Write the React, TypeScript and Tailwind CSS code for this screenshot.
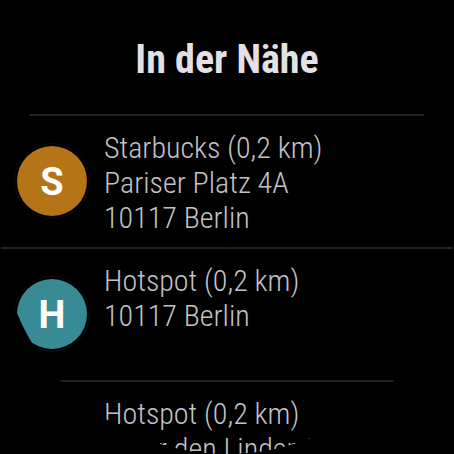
import React from "react";

type Place = {
  id: number;
  letter: string;
  color: string;
  lines: string[];
};

const places: Place[] = [
  {
    id: 1,
    letter: "S",
    color: "bg-[#b47417]",
    lines: ["Starbucks (0,2 km)", "Pariser Platz 4A", "10117 Berlin"],
  },
  {
    id: 2,
    letter: "H",
    color: "bg-[#388b94]",
    lines: ["Hotspot (0,2 km)", "10117 Berlin"],
  },
  {
    id: 3,
    letter: "H",
    color: "bg-[#388b94]",
    lines: ["Hotspot (0,2 km)", "Unter den Linden 77"],
  },
];

const PlaceRow = ({ place }: { place: Place }) => {
  return (
    <li className="flex h-[133px] items-start border-t-2 border-[#222222] px-3.5 pt-3.5">
      <div className="mr-3.5 mt-[13px] shrink-0 rounded-full border border-[#0c0d10] p-0.5">
        <div
          className={`${place.color} flex size-[70px] items-center justify-center rounded-full pt-0.5 font-['Roboto'] text-[38px] font-bold text-white`}
        >
          {place.letter}
        </div>
      </div>
      <div className="text-[30px] font-light leading-[35px] text-[#c4c2c8]">
        {place.lines.map((line) => (
          <p key={line} className="whitespace-nowrap">
            {line}
          </p>
        ))}
      </div>
    </li>
  );
};

const App = () => {
  return (
    <div className="bg-black">
      {/* round watch face, the list runs off its lower edge */}
      <main className="aspect-square w-full overflow-hidden rounded-full bg-black font-['Roboto_Condensed','Roboto',sans-serif]">
        <h1 className="h-[114px] pt-[37px] text-center text-[40px] font-bold leading-[46px] text-[#e4e1e6]">
          In der Nähe
        </h1>
        <ul>
          {places.map((place) => (
            <PlaceRow key={place.id} place={place} />
          ))}
        </ul>
      </main>
    </div>
  );
};

export default App;
